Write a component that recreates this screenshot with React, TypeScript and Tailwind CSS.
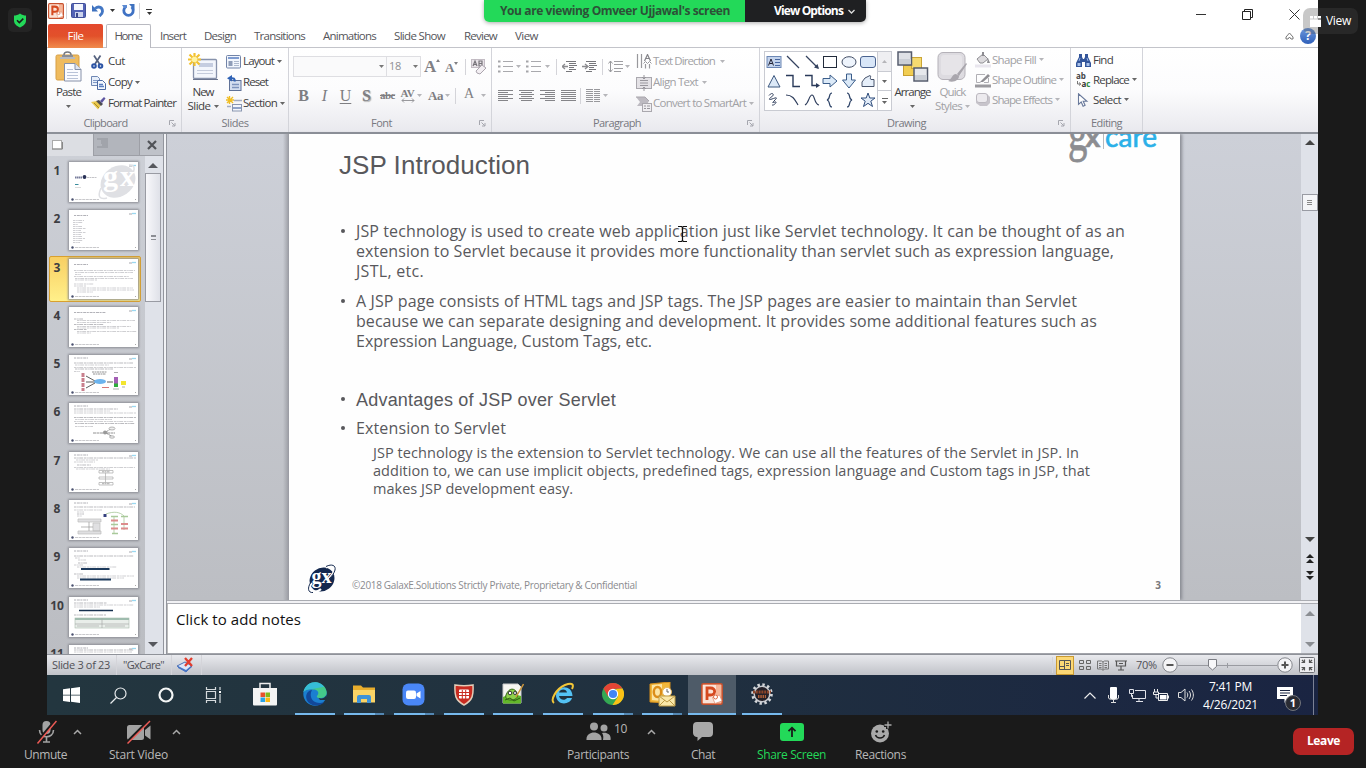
import { useLayoutEffect, useRef, useState } from "react";
import type { ReactNode } from "react";

const UI = "font-['Open_Sans','Noto_Sans',sans-serif]";

/* Single line of text whose letter spacing is tuned so that it fills `w` pixels. */
function T({ w, className = "", children }: { w: number; className?: string; children: string }) {
  const ref = useRef<HTMLSpanElement>(null);
  const [ls, setLs] = useState(0);
  useLayoutEffect(() => {
    if (ref.current) {
      const natural = ref.current.getBoundingClientRect().width;
      setLs((w - natural) / children.length);
    }
  }, []);
  return (
    <span className={`inline-block shrink-0 whitespace-nowrap ${className}`} style={{ width: w }}>
      <span ref={ref} style={{ letterSpacing: ls }}>{children}</span>
    </span>
  );
}

function Svg({ w, h, className = "", vb, children }: { w: number; h: number; className?: string; vb?: string; children: ReactNode }) {
  return (
    <svg width={w} height={h} viewBox={vb ?? `0 0 ${w} ${h}`} fill="none" className={`block shrink-0 ${className}`}>
      {children}
    </svg>
  );
}

function Caret({ className = "text-[#666]" }: { className?: string }) {
  return (
    <Svg w={5} h={3} className={className}><path d="M0 0h5L2.5 3z" fill="currentColor" /></Svg>
  );
}

function Group({ className, label, labelW, launcher = true, children }: { className: string; label: string; labelW: number; launcher?: boolean; children: ReactNode }) {
  return (
    <div className={`flex shrink-0 flex-col border-r border-[#d3d4da] ${className}`}>
      <div className="flex h-[66px] items-start">{children}</div>
      <div className="flex h-[18px] items-center text-[11px] leading-[18px] text-[#77787f]">
        <div className="flex flex-1 justify-center"><T w={labelW}>{label}</T></div>
        {launcher && (
          <Svg w={17} h={8}>
            <path d="M5.5 6V1.500H10M7.500 3.500L11 7M11 4v3H8" stroke="#a5a6ae" />
          </Svg>
        )}
      </div>
    </div>
  );
}

function Item({ icon, text, w, caret, dim, h = "h-[21px]", gap = "gap-[5px]" }: { icon: ReactNode; text: string; w: number; caret?: boolean; dim?: boolean; h?: string; gap?: string }) {
  return (
    <div className={`flex items-center ${h} ${dim ? "text-[#a1a1a5]" : "text-[#3f3f42]"}`}>
      <div className="mr-px flex w-4 shrink-0 items-center">{icon}</div>
      <div className={`-mt-px flex items-center text-[11.500px] leading-[20px] ${gap}`}>
        <T w={w}>{text}</T>
        {caret && <Caret className={dim ? "text-[#b5b5b9]" : "text-[#666]"} />}
      </div>
    </div>
  );
}

const Sep = ({ className = "" }: { className?: string }) => <div className={`h-4 w-px shrink-0 bg-[#d4d4d9] ${className}`} />;

/* ---------- ribbon icons ---------- */
const PasteIcon = () => (
  <Svg w={28} h={32}>
    <rect x="1" y="4" width="23" height="25" rx="1.500" fill="#efbb5e" stroke="#d79f45" />
    <path d="M7 4h11v4H7z" fill="#8b8e96" /><path d="M9 4c0-4 7-4 7 0" stroke="#74777f" strokeWidth="1.500" /><path d="M5 6h15v2H5z" fill="#b6b9c0" />
    <path d="M9.500 12.500H20l6 6V30H9.500z" fill="#fbfcff" stroke="#8590a8" /><path d="M20 12.500v6h6" fill="#dfe5f2" stroke="#8590a8" />
    <path d="M12 18.500h6M12 21.500h11M12 24.500h11M12 27.500h11" stroke="#b9c3d8" />
  </Svg>
);
const CutIcon = () => (
  <Svg w={14} h={14}>
    <path d="M3 0.500L8.500 9M9.500 0.500L4 9" stroke="#54617e" strokeWidth="1.700" />
    <circle cx="3" cy="11" r="1.800" stroke="#2c54a5" strokeWidth="2" /><circle cx="9.500" cy="11" r="1.800" stroke="#2c54a5" strokeWidth="2" />
  </Svg>
);
const CopyIcon = () => (
  <Svg w={15} h={14}>
    <path d="M0.500 0.500h6l2 2v7h-8z" fill="#e8effa" stroke="#6f87b3" /><path d="M2 4.500h4M2 6.500h4" stroke="#7f98c6" />
    <path d="M6.500 4.500h5l3 3v6h-8z" fill="#f4f8ff" stroke="#4c6aa3" /><path d="M8 8.500h4M8 10.500h5" stroke="#5b7fc0" strokeWidth="1.300" />
  </Svg>
);
const PainterIcon = () => (
  <Svg w={15} h={13}>
    <path d="M0 5l6-1 4 4-3 4.500z" fill="#e9c84f" /><path d="M3 6l5 5" stroke="#a88b26" />
    <path d="M5 4l3-1 4 4-2 2z" fill="#4c4c55" /><path d="M9 4l4-4 1.500 1.500L11 6z" fill="#5c54a0" />
  </Svg>
);
const NewSlideIcon = () => (
  <Svg w={30} h={28}>
    <rect x="5.500" y="6.500" width="23" height="19" rx="1" fill="#f3f6fc" stroke="#8792ab" strokeWidth="1.300" />
    <path d="M5 26.500h25" stroke="#6a748e" /><path d="M11 12h14" stroke="#c5cde0" strokeWidth="4" /><path d="M9 17.500h16M9 20.500h16" stroke="#c4cbdb" />
    <path d="M6.500 0v13M0 6.500h13M1.500 1.500l10 10M11.500 1.500l-10 10" stroke="#f3c230" strokeWidth="2.200" /><circle cx="6.500" cy="6.500" r="2.800" fill="#fff3a0" />
  </Svg>
);
const LayoutIcon = () => (
  <Svg w={15} h={14}>
    <rect x="0.500" y="0.500" width="14" height="12.500" rx="1" fill="#f2f6fd" stroke="#7284a8" /><path d="M2 3h11" stroke="#7f9cd0" strokeWidth="2" />
    <path d="M2.500 6h4v5h-4z" fill="#8f9db8" /><path d="M8 6.500h5M8 8.500h5M8 10.500h5" stroke="#aeb9cd" />
  </Svg>
);
const ResetIcon = () => (
  <Svg w={16} h={16}>
    <rect x="3.500" y="5.500" width="11.500" height="10" fill="#d4def0" stroke="#5f7197" /><path d="M6 9.500h7M6 12.500h7" stroke="#7d93bd" strokeWidth="1.600" />
    <path d="M8.500 6.500c.5-3-1-3.500-3.500-3.200" stroke="#2f62b5" strokeWidth="2.200" /><path d="M6 0v6.500L1 3.300z" fill="#2f62b5" />
  </Svg>
);
const SectionIcon = () => (
  <Svg w={16} h={16}>
    <path d="M3.500 0v8M0 4h8M1 1l6 6M7 1L1 7" stroke="#f0bd22" strokeWidth="1.400" />
    <path d="M8 4.500h8M1 10.500h4" stroke="#a4adc0" strokeWidth="1.500" /><rect x="6.500" y="8.500" width="9" height="6.500" fill="#f3f6fc" stroke="#8996b0" /><path d="M7 12h8" stroke="#8fa3c9" strokeWidth="2" />
  </Svg>
);
const Lines = ({ align }: { align: "l" | "c" | "r" | "j" }) => {
  const d = { l: "M0 1h15M0 5h15M0 9h15M0 3h10M0 7h10M0 11h10", c: "M0 1h15M0 5h15M0 9h15M2 3h11M2 7h11M2 11h11", r: "M0 1h15M0 5h15M0 9h15M5 3h10M5 7h10M5 11h10", j: "M0 1h15M0 3h15M0 5h15M0 7h15M0 9h15M0 11h15" }[align];
  return <Svg w={15} h={12}><path d={d} transform="translate(0 -.5)" stroke="#858589" /></Svg>;
};
const BulletsIcon = () => (
  <Svg w={15} h={14}><path d="M0 1.500h2.500M0 6.500h2.500M0 11.500h2.500" stroke="#a4a4a8" strokeWidth="2" /><path d="M5 1.500h10M5 6.500h10M5 11.500h10" stroke="#a9a9ad" /></Svg>
);
const IndentIcon = ({ flip }: { flip?: boolean }) => (
  <Svg w={15} h={12}>
    <path d="M4 .5h10M7 2.500h7M7 4.500h8M7 6.500h5M7 8.500h7M4 10.500h6" stroke="#77777b" />
    <path d={flip ? "M0 5.500h5M3 3l3 2.500-3 2.500" : "M1 5.500h5M3 3L0 5.500 3 8"} stroke="#8b8b8f" strokeWidth="1.300" />
  </Svg>
);
const SpacingIcon = () => (
  <Svg w={15} h={13}><path d="M2.500 1v11M.5 3.500l2-2.500 2 2.500M.5 9.500l2 2.500 2-2.500" stroke="#99999d" /><path d="M6 1.500h9M6 4.500h9M6 8.500h9M6 11.500h7" stroke="#9e9ea2" /></Svg>
);
const ColumnsIcon = () => (
  <Svg w={15} h={13}><path d="M0 .5h7M0 2.500h7M0 4.500h7M0 6.500h7M0 8.500h7M0 10.500h7M0 12.500h7M8 .5h6M8 2.500h6M8 4.500h6M8 6.500h6M8 8.500h6M8 10.500h6M8 12.500h6" stroke="#98989c" /></Svg>
);
const TextDirIcon = () => (
  <Svg w={16} h={15}><path d="M1.500 0v14M5.500 0v14M9.500 14.500V10M13.500 14.500V10" stroke="#98989c" strokeWidth="1.200" /><path d="M7.500 9.500l2-2 2 2M11.500 9.500l2-2 2 2" stroke="#98989c" /><path d="M8.500 7l3-6.500 3 6.500M9.500 4.500h4" stroke="#85858a" strokeWidth="1.200" /></Svg>
);
const AlignTextIcon = () => (
  <Svg w={16} h={16}><rect x=".5" y="2.500" width="15" height="11" fill="#e4e2e6" stroke="#aaa8ae" /><path d="M4 5.500h8M4 8h8M4 10.500h8" stroke="#99979d" strokeWidth="1.200" /><path d="M8 0v4M6 2l2 2 2-2M8 16v-4M6 14l2-2 2 2" stroke="#98969c" /></Svg>
);
const SmartArtIcon = () => (
  <Svg w={16} h={16}><path d="M0 1h9l4 4-3 5H1l3-4z" fill="#bdbac1" /><path d="M0 1h9l4 4" stroke="#a9a6ad" /><rect x="6.500" y="7.500" width="9" height="8" fill="#efedf0" stroke="#aaa8ae" /><path d="M8 10h2M11 10h3M8 12.500h2M11 12.500h3" stroke="#99979d" /></Svg>
);
const ArrangeIcon = () => (
  <Svg w={32} h={32}>
    <rect x="6.500" y="14.500" width="11" height="10" fill="#f1cd52" stroke="#c89f2e" /><rect x="14.500" y="6.500" width="10" height="11" fill="#f6db70" stroke="#cba536" />
    <rect x="1" y="1" width="13.500" height="13" fill="#dfe1e6" stroke="#555c6d" strokeWidth="1.500" /><rect x="17" y="17" width="13.500" height="13" fill="#e6e8ec" stroke="#555c6d" strokeWidth="1.500" />
    <path d="M2 8h12v5H2zM18 24h12v5H18z" fill="#cbcfd6" />
  </Svg>
);
const QuickIcon = () => (
  <Svg w={31} h={32}>
    <rect x="1" y="1.500" width="27" height="27" rx="5" fill="#dddbe0" stroke="#b4b1b8" /><rect x="4" y="4" width="21" height="20" rx="3" fill="#e6e4e8" />
    <path d="M29 12l-9 11 2 2 8-12zM19 23c-4 0-4 5-8 7 6 2 11-1 11-5z" fill="#a9a6ad" />
  </Svg>
);
const FillIcon = () => (
  <Svg w={16} h={16}><path d="M2 7l6-5 5 5-5 4H5z" fill="#dcdadd" stroke="#908f94" /><path d="M7 4V0h2v4M13 6l2 5h-3z" fill="#8e8d92" /><path d="M0 12.500h16v3H0z" fill="#e9e6ee" /></Svg>
);
const OutlineIcon = () => (
  <Svg w={16} h={15}><path d="M10 1.500H1.500v8h4M13.500 5v4.500H9" stroke="#b0afb4" /><path d="M5 9l8-8 2 2-7 6z" fill="#8f8e93" /><path d="M0 13h16" stroke="#9b9a9f" strokeWidth="3" /></Svg>
);
const EffectsIcon = () => (
  <Svg w={16} h={14}><path d="M3 1h9l3 3v6l-3 3H5l-4-3V4z" fill="#c7c4cb" /><rect x="1.500" y=".5" width="11" height="9" rx="2.500" fill="#eceaee" stroke="#bbb8bf" /></Svg>
);
const FindIcon = () => (
  <Svg w={15} h={13}><path d="M3 0h3v3l1 2h1l1-2V0h3v3l3 6v4H9V8H6v5H0V9l3-6z" fill="#33559a" /><path d="M1.500 9h3v3h-3zM10.500 9h3v3h-3z" fill="#a9c2ec" /><path d="M4 4L3 7M11 4l1 3" stroke="#93b1e5" /></Svg>
);
const ReplaceIcon = () => (
  <svg width="16" height="15" viewBox="0 0 16 15" className="block shrink-0 overflow-visible">
    <text x="0" y="6" className="fill-[#444] font-['Open_Sans'] text-[8px] font-bold">ab</text>
    <path d="M1.500 8v3h3M3 9.500L4.800 11 3 12.500" fill="none" stroke="#555" strokeWidth=".8" />
    <text x="5.500" y="14" className="fill-[#333] font-['Open_Sans'] text-[8px] font-bold">a<tspan fill="#2f8a3a">c</tspan></text>
  </svg>
);
const SelectIcon = () => (
  <Svg w={14} h={14}><path d="M2.500.8v10.500l2.700-2.300 1.900 4.300 2-1-1.900-4h3.700z" fill="#fff" stroke="#69799b" strokeWidth="1.100" /></Svg>
);

/* ---------- shapes gallery ---------- */
const shapes: ReactNode[] = [
  <g key="0"><rect x="1" y="2.500" width="14" height="11" fill="#c3d3ec" stroke="#6d88b5" /><path d="M2.500 11.500L5 5l2.500 6.500M3.500 9.500h3" stroke="#223" /><path d="M9 5.500h5M9 8.500h5M9 11.500h5" stroke="#4867a0" /></g>,
  <path key="1" d="M2 2l12 12" stroke="#34425f" strokeWidth="1.200" />,
  <g key="2"><path d="M2 2l12 12" stroke="#34425f" strokeWidth="1.200" /><path d="M15 15l-5-1.500 3.500-3.500z" fill="#34425f" /></g>,
  <rect key="3" x="1.500" y="2.500" width="13" height="11" fill="#fff" stroke="#222b3b" />,
  <ellipse key="4" cx="8" cy="8" rx="7" ry="5.300" fill="#eef4fc" stroke="#444f66" />,
  <rect key="5" x=".5" y="2.500" width="15" height="11" rx="2.500" fill="#d8e6f8" stroke="#49628f" />,
  <path key="6" d="M8 2.500l6 11.500H2z" fill="#dce9f7" stroke="#3d587f" />,
  <path key="7" d="M1 2.500h7v11h7" stroke="#2a3a5a" strokeWidth="1.400" />,
  <g key="8"><path d="M1 2.500h7v10h5" stroke="#2a3a5a" strokeWidth="1.400" /><path d="M16 12.500l-4-2.500v5z" fill="#2a3a5a" /></g>,
  <path key="9" d="M1 5.500h7V2l7 6-7 6v-3.500H1z" fill="#dceaf8" stroke="#3b5d8a" />,
  <path key="10" d="M5.500 1v6H1.500L8 15l6.500-8h-4V1z" fill="#dceaf8" stroke="#3b5d8a" />,
  <path key="11" d="M2 13.500V9l3-4 5-2.500c2 0-1 4 1 4h3v7z" fill="#e6effa" stroke="#48546c" />,
  <path key="12" d="M3 3.500c3-4 6-1 3 1s-4 4 0 2.500 6-2 3 1-3 3 0 2-1 4-3 3" stroke="#34425f" />,
  <path key="13" d="M1 3c7 0 9 5 12 10" stroke="#2e3d5c" strokeWidth="1.200" />,
  <path key="14" d="M1 13C5 11 5 3 8 3s2 9 7 10" stroke="#2e3d5c" strokeWidth="1.200" />,
  <path key="15" d="M10 1C6 1 9 7 5 8c4 1 1 7 5 7" stroke="#2e4468" strokeWidth="1.200" />,
  <path key="16" d="M6 1c4 0 1 6 5 7-4 1-1 7-5 7" stroke="#2e4468" strokeWidth="1.200" />,
  <path key="17" d="M8 1l1.800 5H15l-4.200 3.200L12.500 14.500 8 11.300l-4.500 3.200 1.700-5.300L1 6h5.200z" fill="#e3edf9" stroke="#2f4d7c" />,
];

/* ---------- thumbnails ---------- */
type L = [number, number, number];
const thumbLines: L[][] = [
  [],
  [[4, 10.5, 11], [4, 12.5, 10], [4, 14.5, 5], [4, 16.5, 9], [4, 18.5, 13], [4, 20.5, 8], [4, 22.5, 13], [4, 24.5, 8], [4, 26.5, 9], [4, 28.5, 12], [4, 30.5, 10], [4, 32.5, 7]],
  [[5, 11.5, 61], [6, 13.5, 58], [6, 15.5, 6], [5, 17.5, 55], [6, 19.5, 58], [6, 21, 22], [5, 25, 20], [5, 27, 12], [8, 29, 56], [8, 31, 57], [8, 33, 16]],
  [[5, 12, 9], [8, 13.5, 58], [8, 15.5, 34], [5, 17.5, 30], [8, 19.5, 54], [8, 21, 42], [5, 22.5, 13], [8, 24.5, 60], [8, 26, 14]],
  [[5, 8, 59], [6, 10, 34], [5, 12.5, 62], [6, 14, 38], [5, 16.5, 6]],
  [[5, 6, 44], [5, 8, 36], [5, 10, 62], [5, 14.5, 62], [6, 16.5, 37], [5, 18.5, 60], [6, 20.5, 60], [6, 23.5, 18]],
  [[5, 6, 62], [7, 8, 22], [5, 10, 21], [8, 13, 14], [5, 15.5, 61], [7, 17, 34]],
  [[5, 7, 61], [5, 10, 28], [8, 12, 7], [8, 14, 7], [8, 16, 5]],
  [[5, 8, 60], [6, 10, 5], [9, 12, 8], [9, 15, 9], [5, 17, 9], [8, 19, 40], [5, 26, 9], [8, 28, 57], [8, 30, 47]],
  [[5, 6, 33], [5, 8, 60], [5, 10, 26], [5, 18, 32]],
  [[5, 5, 60], [5, 7, 58]],
];

function thumbExtra(i: number): ReactNode {
  if (i === 0)
    return (
      <g>
        <ellipse cx="49" cy="19.500" rx="18.500" ry="15" fill="#dfe0e4" transform="rotate(-35 49 19.500)" />
        <path d="M60 3c8-1 5 8 2 12M32 26c-4 9-1 12 6 10" stroke="#dfe0e4" strokeWidth="1.500" />
        <text x="34" y="24" className="fill-white font-['Liberation_Serif'] text-[30px] font-bold" textLength="32">gx</text>
        <path d="M6 15.500h7" stroke="#777c9b" strokeWidth="2" strokeDasharray="1.500 .4" /><circle cx="15.500" cy="15" r="1.900" fill="#283056" /><path d="M18 15.500h10" stroke="#c4c4c8" strokeDasharray="2 .5" />
        <path d="M6 22.500h3.500" stroke="#3a8c9c" /><path d="M6 25.500h6" stroke="#ccc" strokeWidth=".7" />
      </g>
    );
  if (i === 4)
    return (
      <g>
        <path d="M14 18v18" stroke="#c9808d" strokeWidth="3" strokeDasharray="4 1" /><path d="M17 21l9 5M17 27h9M17 33l9-5M38 27h6" stroke="#333" strokeWidth=".8" />
        <ellipse cx="31" cy="26.500" rx="6" ry="2.500" fill="#6cb4ee" /><path d="M23 17h15M24 19h13" stroke="#777" strokeWidth=".8" strokeDasharray="2 .5" />
        <rect x="45" y="22" width="4" height="7" fill="#a45fb5" /><rect x="45" y="28.500" width="4" height="3.500" fill="#2fae3d" /><rect x="52" y="26" width="5" height="4" fill="#f3e52e" /><path d="M33 32.500h7" stroke="#c55" strokeWidth=".8" /><path d="M45 17.500h4M44 34h6M53 32h3" stroke="#999" strokeWidth=".8" />
      </g>
    );
  if (i === 5) return <g><path d="M24 30h14M37 29l6-4M37 30l7 4M38 30h8" stroke="#777" strokeWidth=".8" strokeDasharray="3 .5" /><ellipse cx="43" cy="25.500" rx="3" ry="1.500" stroke="#999" fill="#eee" strokeWidth=".7" /><ellipse cx="43" cy="34" rx="2.500" ry="1.200" stroke="#999" fill="#eee" strokeWidth=".7" /><circle cx="36" cy="29.500" r="2" fill="#999" /></g>;
  if (i === 6) return <g stroke="#aaa" strokeWidth=".7"><path d="M30 18.500h14v2.500H30zM30 25h14v2H30zM30 30.500h14v2.500H30zM36.500 21v9.500" /><path d="M33 19.800h8M33 31.700h8" stroke="#888" strokeDasharray="2 .5" /></g>;
  if (i === 7)
    return (
      <g strokeWidth=".7">
        <path d="M9 19h23v3H9zM9 31h23v3H9zM24 23h7v8h-7z" fill="#e0e0e2" stroke="#bbb" /><path d="M20 22v9M12 27h12" stroke="#999" /><rect x="34.500" y="14" width="3" height="3" fill="#35417e" />
        <path d="M37 14c8-3 14-2 18 2v14M45 16v17" stroke="#9bbf8a" /><path d="M42 20.500h7M42 28.500h7M52 24h7M52 28.500h7" stroke="#dc8c8c" strokeWidth="1.800" /><path d="M42 16.500h7M42 24.500h7M43 33.500h6M52 16.500h7" stroke="#a9c99a" strokeWidth="1.500" />
      </g>
    );
  if (i === 8) return <path d="M12 21h28.500M11 31.500h31" stroke="#1d3a5c" strokeWidth="1.800" />;
  if (i === 9) return <g><path d="M10 13.500h34" stroke="#16304f" strokeWidth="1.600" /><rect x="6" y="21" width="54" height="10" fill="#e9eeea" stroke="#a9b8ab" strokeWidth=".6" /><path d="M6 22h54" stroke="#9fbcae" strokeWidth="2" /><path d="M33 21v10M6 27h54M8 29h22M36 29h20" stroke="#aaa" strokeWidth=".7" /></g>;
  return null;
}

function Thumb({ i }: { i: number }) {
  const sel = i === 2;
  return (
    <div className="flex h-[48.300px] w-[93px] shrink-0">
      <div className={`-mt-[3px] flex h-[46px] w-[92px] rounded-[2px] border pt-[2px] ${sel ? "border-[#d8a02f] bg-linear-to-b from-[#f8cf63] to-[#fff08a]" : "border-transparent"}`}>
        <div className="flex w-[19px] shrink-0 justify-center pt-[1px] pr-[5px] text-[12px] font-bold leading-[16px] text-[#3d3d42]">{i + 1}</div>
        <svg width="69" height="40" viewBox="0 0 69 40" fill="none" className="block shrink-0 bg-white shadow-[0_0_2px_1px_#8b8d94]">
          {i > 0 && <path d={`M4 3h${i === 3 ? 32 : 14}`} stroke="#b2b2b8" strokeDasharray="2 .8 3 .6" transform={i === 1 || i === 2 || i === 3 ? "translate(1 2.500)" : "translate(1 0)"} />}
          <path d="M60 4h3" stroke="#c4c4c8" strokeWidth="1.500" /><path d="M63 3.500h4" stroke="#9bd8f0" strokeWidth="1.300" />
          {thumbLines[i].map(([x, y, w], k) => <path key={k} d={`M${x} ${y}h${w}`} stroke={i === 1 || i === 2 ? "#c3c3c8" : k % 3 === 0 ? "#a9a9ae" : "#c3c3c7"} strokeWidth=".8" strokeDasharray="2.500 .7 1.500 .5 4 .8" />)}
          {thumbExtra(i)}
          <circle cx="3.500" cy="37.500" r="1.200" fill="#4a5170" /><path d="M6 37.500h24" stroke="#bbbbbf" strokeWidth=".8" strokeDasharray="3 .6" /><path d="M66 37.500h1" stroke="#aaa" />
        </svg>
      </div>
    </div>
  );
}

/* ---------- taskbar ---------- */
function Task({ children, on, active, split }: { children: ReactNode; on?: boolean; active?: boolean; split?: boolean }) {
  return (
    <div className={`flex h-10 w-[49.700px] shrink-0 flex-col items-center ${active ? "bg-[#4e5b68] bg-clip-content px-[1px]" : ""}`}>
      <div className="flex h-[38px] items-center justify-center">{children}</div>
      {on && (
        <div className={`flex h-[2px] ${active ? "w-full" : "w-10"} bg-[#76b9ed]`}>
          {split && <div className="ml-auto w-[9px] bg-[#5387b3]" />}
        </div>
      )}
    </div>
  );
}

function ZoomBtn({ icon, label, w, color = "text-[#b8b8b8]" }: { icon: ReactNode; label: string; w: number; color?: string }) {
  return (
    <div className={`flex shrink-0 flex-col items-center ${color}`}>
      <div className="flex h-[31px] items-center pt-[2px]">{icon}</div>
      <T w={w} className="text-[12px] leading-[18px]">{label}</T>
    </div>
  );
}
const Up = ({ className = "" }: { className?: string }) => <Svg w={9} h={6} className={className}><path d="M1 5l3.500-3.500L8 5" stroke="#a9a9a9" strokeWidth="1.500" /></Svg>;

const body = "text-[16px] leading-[20px]";

function Bullet({ children, className = "" }: { children: ReactNode; className?: string }) {
  return (
    <div className={`flex ${className}`}>
      <div className="mt-[8px] mr-[11px] ml-[1px] size-[4px] shrink-0 rounded-full bg-[#58585c]" />
      <div className="flex flex-col">{children}</div>
    </div>
  );
}

function Ribbon() {
  return (
    <div className="flex h-[84px] shrink-0 bg-linear-to-b from-white via-[#fcfcfd] via-50% to-[#e9e9ee]">
      <Group className="w-[135px]" label="Clipboard" labelW={44}>
        <div className="flex w-[44px] flex-col items-center pt-[3px] pr-px text-[11.500px] text-[#3f3f42]">
          <PasteIcon />
          <T w={25} className="mt-[1px] leading-[16px]">Paste</T>
          <Caret className="mt-[5px] text-[#666]" />
        </div>
        <div className="pt-[3px]">
          <Item icon={<CutIcon />} text="Cut" w={17} />
          <Item icon={<CopyIcon />} text="Copy" w={24} caret gap="gap-[3px]" />
          <Item icon={<PainterIcon />} text="Format Painter" w={68} />
        </div>
      </Group>
      <Group className="w-[107px]" label="Slides" labelW={27} launcher={false}>
        <div className="flex w-[44px] flex-col items-center pt-[5px] pr-[2px] text-[11.500px] text-[#3f3f42]">
          <NewSlideIcon />
          <T w={21} className="mt-[3px] leading-[16px]">New</T>
          <div className="-mt-[2px] flex items-center gap-[3px]"><T w={23} className="leading-[16px]">Slide</T><Caret /></div>
        </div>
        <div className="pt-[3px]">
          <Item icon={<LayoutIcon />} text="Layout" w={31} caret gap="gap-[3px]" />
          <Item icon={<ResetIcon />} text="Reset" w={25} />
          <Item icon={<SectionIcon />} text="Section" w={34} caret gap="gap-[3px]" />
        </div>
      </Group>
      <Group className="w-[203px]" label="Font" labelW={21}>
        <div className="flex flex-col pt-2 pl-1">
          <div className="flex h-[21px] items-center">
            <div className="flex h-[21px] w-[94px] items-center justify-end border border-[#dedee2] bg-[#fafafb] pr-[2px]"><Caret className="text-[#777]" /></div>
            <div className="flex h-[21px] w-[34px] items-center justify-between border border-l-0 border-[#dedee2] bg-[#fafafb] pr-[2px] pl-[2px] text-[11px] text-[#8f8f93]"><T w={12}>18</T><Caret className="text-[#777]" /></div>
            <div className="ml-[3px] flex w-[20px] font-['Liberation_Serif',serif] text-[17px] font-bold text-[#808084]">A<Svg w={4} h={3} className="mt-[5px]"><path d="M0 3L2 0l2 3z" fill="#808084" /></Svg></div>
            <div className="ml-[1px] flex w-[18px] items-center pt-[2px] font-['Liberation_Serif',serif] text-[13px] font-bold text-[#808084]">A<Svg w={4} h={3} className="-mt-2"><path d="M0 0l2 3 2-3z" fill="#808084" /></Svg></div>
            <Sep className="mr-[5px] ml-[2px]" />
            <Svg w={16} h={17}>
              <rect x=".5" y="1.500" width="13" height="8" fill="#e8e3e8" stroke="#c3bcc4" /><path d="M2 8l2-5 2 5M2.500 6.500h3M8 3v5h3V3zM8 5.500h3" stroke="#77747a" strokeWidth="1.200" />
              <path d="M5 13l6-6 4 3-6 6-3-1z" fill="#f3eff3" stroke="#aba5ae" />
            </Svg>
          </div>
          <div className="mt-2 flex h-[21px] items-center font-['Liberation_Serif',serif] text-[16px] text-[#7e7e82]">
            <div className="w-[21px] text-center font-bold">B</div>
            <div className="w-[21px] text-center italic">I</div>
            <div className="w-[21px] text-center underline underline-offset-2">U</div>
            <div className="w-[21px] text-center font-bold [text-shadow:1px_1px_1px_#aaa]">S</div>
            <div className="flex w-[21px] justify-center"><T w={15} className="text-[11px] font-bold line-through">abc</T></div>
            <div className="flex w-[17px] flex-col items-center justify-center pl-[2px]"><T w={14} className="text-[11px] font-bold leading-[10px]">AV</T><Svg w={14} h={5}><path d="M1 2.500h12M3 .5l-2 2 2 2M11 .5l2 2-2 2" stroke="#99999d" /></Svg></div>
            <Caret className="ml-[2px] text-[#b5b5b9]" />
            <T w={15} className="ml-[6px] text-[13px] font-bold">Aa</T>
            <Caret className="ml-[2px] text-[#b5b5b9]" />
            <Sep className="mr-[8px] ml-[5px]" />
            <div className="w-3 pb-1 text-[14px]">A</div>
            <Caret className="ml-[5px] text-[#b5b5b9]" />
          </div>
        </div>
      </Group>
      <Group className="w-[268px]" label="Paragraph" labelW={48}>
        <div className="flex w-[144px] shrink-0 flex-col pt-2 pl-[6px]">
          <div className="flex h-[21px] items-center">
            <BulletsIcon /><Caret className="mr-[5px] ml-[3px] text-[#b5b5b9]" />
            <BulletsIcon /><Caret className="ml-[4px] text-[#b5b5b9]" />
            <Sep className="mr-[5px] ml-[6px]" /><IndentIcon /><div className="w-[5px]" /><IndentIcon flip />
            <Sep className="mr-[5px] ml-[5px]" /><SpacingIcon /><Caret className="ml-[2px] text-[#b5b5b9]" />
          </div>
          <div className="mt-2 flex h-[21px] items-center">
            <div className="flex gap-[6px]"><Lines align="l" /><Lines align="c" /><Lines align="r" /><Lines align="j" /></div>
            <Sep className="mr-[5px] ml-[4px]" /><ColumnsIcon /><Caret className="ml-[2px] text-[#b5b5b9]" />
          </div>
        </div>
        <div className="pt-[3px]">
          <Item dim icon={<TextDirIcon />} text="Text Direction" w={62} caret />
          <Item dim icon={<AlignTextIcon />} text="Align Text" w={45} caret gap="gap-[4px]" />
          <Item dim icon={<SmartArtIcon />} text="Convert to SmartArt" w={93} caret gap="gap-[3px]" />
        </div>
      </Group>
      <Group className="w-[311px]" label="Drawing" labelW={39}>
        <div className="mt-[3px] ml-1 flex h-[60px] shrink-0 border border-[#c9cbd2] bg-white">
          <div className="grid w-[112px] grid-cols-6 items-center justify-items-center">
            {shapes.map((s, k) => <Svg key={k} w={16} h={16}>{s}</Svg>)}
          </div>
          <div className="flex w-[14px] flex-col border-l border-[#c9cbd2]">
            <div className="flex flex-1 items-center justify-center bg-[#efeff2]"><Caret className="rotate-180 text-[#b5b5b9]" /></div>
            <div className="flex flex-1 items-center justify-center border-y border-[#c9cbd2]"><Caret /></div>
            <div className="flex flex-1 flex-col items-center justify-center gap-[2px]"><div className="h-px w-[6px] bg-[#666]" /><Caret /></div>
          </div>
        </div>
        <div className="flex w-[42px] shrink-0 flex-col items-center pt-[3px] pr-px text-[11.500px] text-[#3f3f42]">
          <ArrangeIcon />
          <T w={36} className="mt-[1px] leading-[16px]">Arrange</T>
          <Caret className="mt-[5px] text-[#666]" />
        </div>
        <div className="flex w-[39px] shrink-0 flex-col items-center pt-[3px] pr-[2px] text-[11.500px] text-[#a1a1a5]">
          <QuickIcon />
          <T w={26} className="mt-[1px] leading-[16px]">Quick</T>
          <div className="-mt-[2px] flex items-center gap-[3px]"><T w={27} className="leading-[16px]">Styles</T><Caret className="text-[#b5b5b9]" /></div>
        </div>
        <div className="pt-[2px] pl-[2px]">
          <Item h="h-5" dim icon={<FillIcon />} text="Shape Fill" w={44} caret gap="gap-[3px]" />
          <Item h="h-5" dim icon={<OutlineIcon />} text="Shape Outline" w={64} caret gap="gap-[3px]" />
          <Item h="h-5" dim icon={<EffectsIcon />} text="Shape Effects" w={60} caret gap="gap-[3px]" />
        </div>
      </Group>
      <Group className="w-[72px]" label="Editing" labelW={31} launcher={false}>
        <div className="pt-[2px] pl-[5px]">
          <Item h="h-5" icon={<FindIcon />} text="Find" w={20} />
          <Item h="h-5" icon={<ReplaceIcon />} text="Replace" w={36} caret gap="gap-[3px]" />
          <Item h="h-5" icon={<SelectIcon />} text="Select" w={28} caret gap="gap-[3px]" />
        </div>
      </Group>
    </div>
  );
}

const PptIcon = ({ s }: { s: number }) => (
  <Svg w={s} h={s} vb="0 0 22 22">
    <rect x=".8" y=".8" width="20.400" height="20.400" rx="1.500" fill="#f6b699" stroke="#c6502e" strokeWidth="1.500" /><rect x="2" y="2" width="13" height="18" fill="#fbe3d8" />
    <path d="M6 17V5h3.500c5.500 0 5.500 7 0 7H7" stroke="#d5491f" strokeWidth="2.800" /><path d="M11.500 14.500l7-2.500 2.500 6-7 2.500z" fill="#fff" stroke="#e08a6b" strokeWidth=".7" /><circle cx="14.500" cy="14" r="2" stroke="#dd6a43" fill="#fff" />
  </Svg>
);

export default function App() {
  return (
    <div className={`relative flex h-[768px] w-[1366px] flex-col overflow-hidden bg-[#1a1a1a] ${UI}`}>
      <div className="flex h-[715px] shrink-0">
        <div className="flex w-[47px] shrink-0 justify-end pt-2 pr-[15px]">
          <div className="flex size-6 items-center justify-center rounded-[5px] bg-[#242424]">
            <Svg w={14} h={15}><path d="M7 .5c2 1.500 4 2 6 2v5c0 3.500-3 5.700-6 7-3-1.300-6-3.500-6-7v-5c2 0 4-.5 6-2z" fill="#23d959" /><path d="M4 7.300l2.300 2.300 4-4" stroke="#1a1a1a" strokeWidth="1.500" /></Svg>
          </div>
        </div>

        <div className="flex w-[1271px] shrink-0 flex-col overflow-hidden bg-white">
          {/* title bar */}
          <div className="flex h-6 shrink-0 items-center">
            <div className="flex items-center pb-[3px] pl-[1px]">
              <PptIcon s={16} />
              <Sep className="mr-1 ml-[2px] bg-[#999]" />
              <Svg w={15} h={15}><rect x=".5" y=".5" width="14" height="14" rx="1" fill="#5363b5" stroke="#414f9a" /><path d="M3 1h9v6H3z" fill="#f3f6fd" /><path d="M4 9h8v5H4z" fill="#ccd3ec" /><path d="M5 10h2v4H5z" fill="#3c488b" /></Svg>
              <Svg w={13} h={13} className="ml-[6px]"><path d="M3 4.500c4-3 7.500-1 7.500 3 0 2-1 3-3 4.500" stroke="#4377c4" strokeWidth="2.800" /><path d="M0 7.500V1l6 6.500z" fill="#3f72bf" /></Svg>
              <Caret className="ml-[5px] text-[#333]" />
              <Svg w={13} h={13} className="ml-[7px]"><path d="M3.500 3a4.700 4.700 0 1 0 6 0" stroke="#3f72c4" strokeWidth="2.800" /><path d="M7 0h5.500v6z" fill="#3f72bf" /><path d="M0 1h5v3H2z" fill="#5c8ad2" /></Svg>
              <Sep className="mr-[6px] ml-[4px] bg-[#aaa]" />
              <div className="flex flex-col items-center gap-[2px] pt-[2px]"><div className="h-px w-[6px] bg-[#333]" /><Caret className="text-[#333]" /></div>
            </div>
            <div className="ml-auto flex items-center gap-9 pt-1 pr-[18px]">
              <Svg w={10} h={10}><path d="M0 5.500h10" stroke="#333" /></Svg>
              <Svg w={11} h={11}><path d="M.5 2.500h8v8h-8zM2.500 2.500v-2h8v8h-2" stroke="#222" /></Svg>
              <Svg w={11} h={11}><path d="M.5.5l10 10M10.500.5l-10 10" stroke="#333" /></Svg>
            </div>
          </div>
          {/* tabs */}
          <div className="flex h-6 shrink-0 items-center border-b border-[#c3c4ca] text-[11.500px] leading-[23px] text-[#55555a]">
            <div className="ml-[1px] flex h-6 w-[55px] justify-center self-start rounded-t-[2px] bg-linear-to-b from-[#e4492e] via-[#e2502a] to-[#f08a4c] text-white"><T w={16}>File</T></div>
            <div className="z-10 ml-[3px] flex h-6 w-[45px] justify-center self-start rounded-t-[2px] border-x border-t border-[#b9bac1] bg-white leading-[22px]"><T w={27} className="-ml-px">Home</T></div>
            <T w={26} className="ml-[9px]">Insert</T>
            <T w={32} className="ml-[18px]">Design</T>
            <T w={51} className="ml-[18px]">Transitions</T>
            <T w={53} className="ml-[18px]">Animations</T>
            <T w={51} className="ml-[18px]">Slide Show</T>
            <T w={33} className="ml-[19px]">Review</T>
            <T w={23} className="ml-[18px]">View</T>
            <Svg w={9} h={8} className="ml-auto"><path d="M1 5l3.500-4L8 5v2H6L4.500 5 3 7H1z" stroke="#777" fill="#fff" /></Svg>
            <div className="mr-[2px] ml-[6px] flex size-4 items-center justify-center rounded-full bg-linear-to-b from-[#6d97dc] to-[#2f5fb9] text-[12px] font-bold leading-none text-white">?</div>
          </div>

          <Ribbon />
          <div className="h-[2px] shrink-0 bg-[#8c9098]" />

          {/* workspace */}
          <div className="flex h-[520px] shrink-0">
            <div className="flex w-[116px] shrink-0 flex-col bg-linear-to-b from-[#cdd0d7] to-[#bbbdc2]">
              <div className="flex h-[22px] shrink-0 text-[#666]">
                <div className="flex w-[46px] items-center bg-[#dcdee3] pl-[5px]"><Svg w={11} h={10}><rect x=".5" y=".5" width="9" height="8.500" fill="#fff" stroke="#aaa" /><path d="M0 9h10.500V2" stroke="#888" /></Svg></div>
                <div className="flex w-[47px] items-center border border-t-0 border-[#9d9fa6] bg-[#b2b5bc] pb-[3px] pl-[3px]"><Svg w={12} h={10}><path d="M0 1h11M4 3h7M4 5h7M5 7h6M0 9h11" stroke="#9c9ea5" strokeWidth="1.300" /></Svg></div>
                <div className="flex flex-1 items-center justify-center border-b border-[#9d9fa6] bg-[#bfc2c9]"><Svg w={10} h={10}><path d="M1 1l8 8M9 1L1 9" stroke="#505257" strokeWidth="2.200" /></Svg></div>
              </div>
              <div className="flex min-h-0 flex-1">
                <div className="flex min-w-0 flex-1 flex-col overflow-hidden pt-[6px] pl-[2px]">
                  {thumbLines.map((_, i) => <Thumb key={i} i={i} />)}
                </div>
                <div className="flex w-[18px] shrink-0 flex-col items-center bg-[#dfe2e9] pr-[2px]">
                  <div className="flex h-[17px] shrink-0 items-center pt-[1px]"><Svg w={10} h={5}><path d="M0 5L5 0l5 5z" fill="#55575c" /></Svg></div>
                  <div className="flex h-[129px] w-4 shrink-0 flex-col items-center justify-center gap-[2px] border border-[#999ba3] bg-linear-to-r from-[#f8f8fb] to-[#dfe1e8]">
                    <div className="h-[2px] w-[5px] bg-[#8c8e94]" /><div className="h-px w-[5px] bg-[#8c8e94]" />
                  </div>
                  <Svg w={10} h={5} className="mt-auto mb-[7px]"><path d="M0 0h10L5 5z" fill="#55575c" /></Svg>
                </div>
              </div>
            </div>
            <div className="w-1 shrink-0 border-r border-l border-[#92959d] bg-[#f1f2f5]" />

            <div className="flex w-[1151px] shrink-0 flex-col">
              <div className="flex h-[466px] shrink-0 bg-linear-to-b from-[#cdd0d8] to-[#bcbec3]">
                <div className="w-[122px] shrink-0 bg-linear-to-r from-transparent from-95% to-[#9a9ca3]" />
                <div className="flex w-[891px] shrink-0 flex-col bg-[#fefefe] text-[#58585c] shadow-[2px_0_3px_#888b93]">
                  <div className="flex h-[85px] justify-between pl-[50px]">
                    <T w={191} className="pt-[14px] font-['Liberation_Sans',sans-serif] text-[26px] leading-[35px]">JSP Introduction</T>
                    <svg width="112" height="30" viewBox="0 0 112 30" className="block shrink-0 overflow-hidden">
                      <text transform="translate(0 15.500) scale(.9 1.320)" className="fill-[#8c8d91] font-['Liberation_Serif',serif] text-[43px]" stroke="#8c8d91" strokeWidth=".6">g</text>
                      <text x="17" y="13" className="fill-[#8c8d91] font-['Liberation_Sans',sans-serif] text-[28px] font-bold" stroke="#8c8d91" strokeWidth=".5">x</text>
                      <path d="M35.500 0v15" stroke="#b9babd" />
                      <text x="37" y="12.500" textLength="52" className="fill-[#2bb0e8] font-['Lato',sans-serif] text-[28px]" stroke="#2bb0e8" strokeWidth=".6">care</text>
                    </svg>
                  </div>
                  <div className="pl-[51px]">
                    <Bullet className="mt-[2px]">
                      <T w={769} className={body}>JSP technology is used to create web application just like Servlet technology. It can be thought of as an</T>
                      <T w={758} className={body}>extension to Servlet because it provides more functionality than servlet such as expression language,</T>
                      <T w={68} className={body}>JSTL, etc.</T>
                    </Bullet>
                    <Bullet className="mt-[10px]">
                      <T w={721} className={body}>A JSP page consists of HTML tags and JSP tags. The JSP pages are easier to maintain than Servlet</T>
                      <T w={741} className={body}>because we can separate designing and development. It provides some additional features such as</T>
                      <T w={296} className={body}>Expression Language, Custom Tags, etc.</T>
                    </Bullet>
                    <Bullet className="mt-[38px]">
                      <T w={260} className="font-['Liberation_Sans',sans-serif] text-[18px] leading-[22px]">Advantages of JSP over Servlet</T>
                    </Bullet>
                    <Bullet className="mt-[7px]">
                      <T w={150} className={body}>Extension to Servlet</T>
                    </Bullet>
                    <div className="mt-[6px] flex flex-col pl-[33px] text-[14.500px] leading-[18px]">
                      <T w={706}>JSP technology is the extension to Servlet technology. We can use all the features of the Servlet in JSP. In</T>
                      <T w={717}>addition to, we can use implicit objects, predefined tags, expression language and Custom tags in JSP, that</T>
                      <T w={200}>makes JSP development easy.</T>
                    </div>
                  </div>
                  <div className="mt-auto flex h-[36px] items-start pl-[18px] text-[10px] text-[#8b8b8f]">
                    <Svg w={30} h={30}>
                      <ellipse cx="15" cy="15.500" rx="13" ry="11.500" fill="#14284e" transform="rotate(-38 15 15.500)" />
                      <path d="M19 3.500c5-2.500 9-2 8.500 2C27 9 24 12 21 15M5 19c-4 5-3 9 1 9 3 0 6-1 8-3" stroke="#fff" strokeWidth="2" />
                      <path d="M19 2.500c6-3 10-1 9 3.500-.7 3-3 6-6 9M4 18c-4 6-3 11 2 10.500" stroke="#14284e" strokeWidth="1" />
                      <text x="4.500" y="19" className="fill-white font-['Liberation_Serif',serif] text-[20px] font-bold" textLength="20">gx</text>
                    </Svg>
                    <T w={285} className="mt-[13px] ml-[15px] leading-[16px]">©2018 GalaxE.Solutions Strictly Private, Proprietary &amp; Confidential</T>
                    <div className="mt-[13px] mr-[19px] ml-auto text-[10px] font-bold leading-[16px] text-[#77777b]">3</div>
                  </div>
                </div>
                <div className="flex-1" />
                <div className="flex w-[17px] shrink-0 flex-col items-center bg-[#dfe2e9]">
                  <Svg w={10} h={5} className="mt-[6px]"><path d="M0 5L5 0l5 5z" fill="#444" /></Svg>
                  <div className="mt-[49px] flex h-[17px] w-4 flex-col items-center justify-center gap-px border border-[#999ba3] bg-[#f4f5f8]"><div className="h-px w-[5px] bg-[#888]" /><div className="h-px w-[5px] bg-[#888]" /><div className="h-px w-[5px] bg-[#888]" /></div>
                  <Svg w={10} h={5} className="mt-auto"><path d="M0 0h10L5 5z" fill="#444" /></Svg>
                  <Svg w={8} h={9} className="mt-[12px]"><path d="M0 4l4-4 4 4zM0 9l4-4 4 4z" fill="#222" /></Svg>
                  <Svg w={8} h={9} className="mt-[8px] mb-[20px]"><path d="M0 0l4 4 4-4zM0 5l4 4 4-4z" fill="#222" /></Svg>
                </div>
              </div>
              <div className="h-1 shrink-0 border-y border-[#aaacb2] bg-[#f1f1f4]" />
              <div className="flex h-[49px] shrink-0 bg-white">
                <div className="flex-1 border-l border-[#bbb] pt-1 pl-[8px] text-[15px] leading-[22px] text-[#111]"><T w={125}>Click to add notes</T></div>
                <div className="flex w-[17px] flex-col items-center justify-between bg-[#dfe2e9] pt-[7px] pb-[6px]">
                  <Svg w={10} h={5}><path d="M0 5L5 0l5 5z" fill="#8b8e93" /></Svg>
                  <Svg w={10} h={5}><path d="M0 0h10L5 5z" fill="#8b8e93" /></Svg>
                </div>
              </div>
              <div className="h-px bg-[#a2a4aa]" />
            </div>
          </div>

          {/* status bar */}
          <div className="flex h-[21px] shrink-0 items-center border-t border-[#8f9299] bg-linear-to-b from-[#e9eaee] to-[#c0c2c8] text-[11px] leading-[20px] text-[#505056]">
            <T w={58} className="ml-[5px]">Slide 3 of 23</T>
            <Sep className="ml-[6px] h-5 bg-[#b2b4ba]" />
            <T w={41} className="ml-[6px]">"GxCare"</T>
            <Sep className="ml-[7px] h-5 bg-[#b2b4ba]" />
            <Svg w={17} h={16} className="ml-[5px]"><path d="M0 9l8-4 7 4-6 6z" fill="#dce7f8" stroke="#4c70b5" /><path d="M1 11l8 4 6-5v-2l-6 5-8-4z" fill="#4775c5" /><path d="M8 1l7 8M15 1L8 9" stroke="#e23d2d" strokeWidth="2.300" /></Svg>
            <Sep className="ml-[7px] h-5 bg-[#b2b4ba]" />
            <Sep className="ml-auto h-4 bg-[#b2b4ba]" />
            <div className="ml-[3px] flex h-[19px] w-[18px] items-center justify-center border border-[#c99a32] bg-[#fcd875]"><Svg w={12} h={11}><path d="M.5.500h11v9H.5zM5.500.500v9M7 3.500h3M7 5.500h3M.5 6.500h5" stroke="#555" /></Svg></div>
            <Svg w={12} h={11} className="ml-[5px]"><path d="M.5.500h4v3h-4zM7.500.500h4v3h-4zM.5 6.500h4v3h-4zM7.500 6.500h4v3h-4z" stroke="#666" /></Svg>
            <Svg w={12} h={11} className="ml-[6px]"><path d="M.5 1h4L6 2l1.500-1h4v8h-4L6 10.500 4.500 9h-4zM6 2v8M2 3.500h2.500M2 5.500h2.500M2 7.500h2.500M7.500 3.500H10M7.500 5.500H10M7.500 7.500H10" stroke="#777" /></Svg>
            <Svg w={12} h={11} className="ml-[6px]"><path d="M0 1h12M1.500 1v5h9V1M6 6v4M3 10h6M4 3.500h4" stroke="#555" strokeWidth="1.200" /></Svg>
            <T w={21} className="ml-[9px]">70%</T>
            <Svg w={16} h={16} className="ml-[5px]"><circle cx="8" cy="8" r="7.200" fill="#f4f4f6" stroke="#85878d" /><path d="M4.500 8h7" stroke="#555" strokeWidth="2" /></Svg>
            <Svg w={99} h={16}><path d="M0 8.500h99M49.500 6v5" stroke="#999ba1" /><path d="M30.500 2.500h8v7l-4 3.500-4-3.500z" fill="#f7f7f9" stroke="#7c7e84" /></Svg>
            <Svg w={16} h={16}><circle cx="8" cy="8" r="7.200" fill="#f4f4f6" stroke="#85878d" /><path d="M4.500 8h7M8 4.500v7" stroke="#555" strokeWidth="2" /></Svg>
            <Svg w={16} h={16} className="mr-[3px] ml-[6px]"><rect x=".5" y=".5" width="15" height="15" rx="1" fill="#eeeef1" stroke="#6e7076" /><path d="M5.500 2.500v3h-3M10.500 2.500v3h3M5.500 13.500v-3h-3M10.500 13.500v-3h3M3 3l2.500 2.500M13 3l-2.500 2.500M3 13l2.500-2.500M13 13l-2.500-2.500" stroke="#555" strokeWidth="1.200" /></Svg>
          </div>

          {/* taskbar */}
          <div className="flex h-10 shrink-0 items-center bg-linear-to-r from-[#23363f] via-[#20303f] to-[#1a2442] text-white">
            <div className="flex w-[190px] shrink-0">
              <div className="flex w-[47.500px] justify-center pl-px"><Svg w={17} h={16}><path d="M0 2.300l7-1v6.400H0zM8 1.200L17 0v7.700H8zM0 8.600h7V15l-7-1zM8 8.600h9V16l-9-1.200z" fill="#fff" /></Svg></div>
              <div className="flex w-[47.500px] justify-center"><Svg w={17} h={17}><circle cx="10.500" cy="6.500" r="5.500" stroke="#e8ebed" strokeWidth="1.200" /><path d="M6.500 10.500L.5 16.500" stroke="#e8ebed" strokeWidth="1.200" /></Svg></div>
              <div className="flex w-[47.500px] justify-center"><Svg w={16} h={16}><circle cx="8" cy="8" r="6.500" stroke="#f3f5f5" strokeWidth="2.200" /></Svg></div>
              <div className="flex w-[47.500px] justify-center"><Svg w={17} h={16}><path d="M1.500 4.500h9v7h-9zM1.500 0v2.500h9V0M1.500 16v-2.500h9V16M15 0v3M15 7v9" stroke="#d5dadd" strokeWidth="1.200" /><path d="M14 4h2v2h-2z" fill="#fff" /></Svg></div>
            </div>
            <div className="ml-[3px] flex">
              <Task><Svg w={24} h={24}><path d="M7 7V1.500h10V7" stroke="#eee" strokeWidth="1.500" /><path d="M0 6h24v16.500a1 1 0 0 1-1 1H1a1 1 0 0 1-1-1z" fill="#f4f4f4" /><path d="M7.500 10.500H12V15H7.500z" fill="#e8502c" /><path d="M12.500 10.500H17V15h-4.500z" fill="#83b81a" /><path d="M7.500 15.500H12V20H7.500z" fill="#2aa3e6" /><path d="M12.500 15.500H17V20h-4.500z" fill="#fcb812" /></Svg></Task>
              <Task on>
                <Svg w={24} h={24}><circle cx="12" cy="12" r="11.700" fill="#1b7fd0" /><path d="M.5 10C2 3 8 0 13 .3 20 1 24 7 23.700 11c-.5 4-4 5.500-8 5-2-.5-2.500-1.500-1-3 2-3-1-6-5-5.500C5 7 2 8 .5 10z" fill="#44c98a" /><path d="M.5 10C2 3 8 0 13 .3c3 .3 6 2 8 4.500L9 7C5 7 2 8 .5 10z" fill="#36bdd8" /><path d="M9 8c-3 5-1 13 8 13 2 0 4-.8 5-1.700C19 24 11 25 6 21 1 16 3 9 9 8z" fill="#12489a" /><path d="M15.500 16c3 1 6 .5 8-3l.5 5h-7z" fill="#21333f" /></Svg>
              </Task>
              <Task on split><Svg w={22} h={20}><path d="M0 1.500h8l2 2h12V18H0z" fill="#e9ae2d" /><path d="M0 6h22v12.500H0z" fill="#fbd466" /><path d="M4 19v-6a2 2 0 0 1 2-2h10a2 2 0 0 1 2 2v6h-4v-4H8v4z" fill="#3f93d8" /></Svg></Task>
              <Task on split><Svg w={23} h={23}><rect x=".5" y=".5" width="22" height="22" rx="6" fill="#4a87f7" /><rect x="4" y="7.500" width="10" height="8.500" rx="2" fill="#fff" /><path d="M14.500 10.500l4-2.500v7.500l-4-2.500z" fill="#fff" /></Svg></Task>
              <Task on><Svg w={20} h={23}><path d="M1 2c6 1 12 1 18 0 .5 10 0 15-9 20C1 17 .5 12 1 2z" fill="#c82b20" stroke="#e3cdb8" strokeWidth="1.500" /><rect x="5" y="6.500" width="10" height="9" rx="1" fill="#fff" /><path d="M5 9.500h10M5 12.500h10M8.300 7v9M11.700 7v9" stroke="#c82b20" /></Svg></Task>
              <Task on><Svg w={22} h={22}><path d="M1 1h15l3 3v16H1z" fill="#f7f7f2" stroke="#ccc" /><path d="M1 14c6-3 12-3 18-1v7.500H1z" fill="#63b72a" /><path d="M4 12c3-8 9-7 11-2s-2 7-6 7-6-2-5-5z" fill="#8ed14a" stroke="#36691a" /><circle cx="8" cy="10" r="1.800" fill="#fff" stroke="#333" /><circle cx="13" cy="10" r="1.500" fill="#fff" stroke="#333" /><path d="M3 17l5-2 4 3 6-3" stroke="#2f5d14" /><path d="M14 14L21.500 1" stroke="#cc963d" strokeWidth="1.500" /></Svg></Task>
              <Task on><Svg w={24} h={24}><path d="M21.500 14H8c.5 4 6 5 8 2h5c-2 7-15 8-16-2C5 3 21 2 21.500 14zM8 10.500h8c-.5-4-7-4-8 0z" fill="#53c2f4" /><path d="M3 21c-4-3 2-14 11-18 8-3 9 0 7 4" stroke="#f3c637" strokeWidth="2" /></Svg></Task>
              <Task on split><Svg w={22} h={22}><circle cx="11" cy="11" r="11" fill="#34a853" /><path d="M1.500 5.500A11 11 0 0 1 20.500 5.500L11 6 6 13.500z" fill="#e54435" /><path d="M20.500 5.500A11 11 0 0 1 10.500 22L16 13.500 14 6z" fill="#fbc116" /><circle cx="11" cy="11" r="5.200" fill="#fff" /><circle cx="11" cy="11" r="4.100" fill="#4285f4" /></Svg></Task>
              <Task on split><Svg w={27} h={25}><path d="M1 2l20-2v21l-20-1z" fill="#f1b73b" stroke="#d68f1c" /><path d="M3 3l10-1v17L3 18z" fill="#fce5a5" /><ellipse cx="8.500" cy="10" rx="3.700" ry="5" stroke="#dc8d19" strokeWidth="2.500" /><circle cx="18" cy="10" r="4.500" fill="#fff" stroke="#e5b65e" /><path d="M18 7v3h2" stroke="#666" /><path d="M10 14h16v10H10z" fill="#fae8a9" stroke="#bd9a45" /><path d="M10 14l8 6 8-6M10 24l6-6M26 24l-6-6" stroke="#bd9a45" /></Svg></Task>
              <Task on active><PptIcon s={22} /></Task>
              <Task on>
                <Svg w={22} h={22}><circle cx="11" cy="11" r="9" stroke="#d5d7da" strokeWidth="3.600" strokeDasharray="2.300 2.420" /><circle cx="11" cy="11" r="7.800" fill="#252129" stroke="#c9cbd0" strokeWidth="1.500" /><path d="M2 9h18" stroke="#8d452a" strokeWidth="3" strokeDasharray="2 .8" /><path d="M7 13.500h8" stroke="#b05f38" strokeWidth="3" strokeDasharray="1.500 .8" /></Svg>
              </Task>
            </div>
            <div className="ml-auto flex items-center">
              <Svg w={12} h={7}><path d="M.5 6.500L6 1l5.500 5.500" stroke="#eee" strokeWidth="1.200" /></Svg>
              <Svg w={11} h={16} className="ml-[12px]"><rect x="2" width="7" height="12" rx="1" fill="#fff" /><path d="M.5 8v3c0 2 10 2 10 0V8M5.500 12v3.500M3 15.500h5" stroke="#ddd" /></Svg>
              <Svg w={17} h={13} className="ml-[10px]"><path d="M6 1.500h10.500v8H3.500V6M10 9.500v3M7 12.500h7M.5.500h4v4h-4zM2.500 4.500v3h1" stroke="#e1e3ea" /></Svg>
              <Svg w={16} h={13} className="ml-[7px]"><path d="M5.500 4.500h9v7h-9z" stroke="#eee" /><path d="M7 6h6.500v4.500H7z" fill="#fff" /><path d="M15.500 6.500v3M1.500 0v3M4.500 0v3M.5 3h5v2.500h-5zM3 5.500V9h2" stroke="#eee" /></Svg>
              <Svg w={16} h={14} className="ml-[9px]"><path d="M.5 4.500H3l4-3.500v12L3 9.500H.5zM9 4.500c1 1.500 1 3.500 0 5M11 3c2 2.500 2 5.500 0 8M13.500 1.500c2.500 3.500 2.500 7.500 0 11" stroke="#ddd" /></Svg>
              <div className="mt-px ml-[8px] flex w-[57px] flex-col items-center text-[12px] leading-[18px]"><T w={43}>7:41 PM</T><T w={55}>4/26/2021</T></div>
              <div className="relative ml-[18px] w-[26px]">
                <Svg w={17} h={17}><path d="M0 0h16v12H10l-2.500 4V12H0z" fill="#fff" /><path d="M3 3.500h10M3 6h10M3 8.500h7" stroke="#1b2643" /></Svg>
                <div className="absolute top-[8px] left-[8px] flex size-[16px] items-center justify-center rounded-full border border-[#72757c] bg-[#292b33] text-[11px] font-bold leading-none">1</div>
              </div>
              <div className="ml-[10px] h-10 w-px bg-[#7b8195]" />
              <div className="w-[4px]" />
            </div>
          </div>
        </div>
        <div className="flex-1" />
      </div>

      {/* meeting controls */}
      <div className="flex h-[53px] shrink-0 items-start">
        <div className="ml-6 flex">
          <ZoomBtn label="Unmute" w={43} icon={<Svg w={22} h={24}><rect x="7.500" y="1" width="8" height="13" rx="4" fill="#a3a3a3" /><path d="M4.500 10c0 9 14 9 14 0M11.500 17v5M8 22h7" stroke="#a3a3a3" strokeWidth="1.600" /><path d="M20.500 0L1.500 22.500" stroke="#1a1a1a" strokeWidth="2.500" /><path d="M21.500 1L2.500 23.500" stroke="#ee5b56" strokeWidth="1.500" /></Svg>} />
          <Up className="mt-[14px] ml-[6px]" />
        </div>
        <div className="ml-[27px] flex">
          <ZoomBtn label="Start Video" w={59} icon={<Svg w={26} h={24}><rect x="1" y="5" width="17" height="15" rx="2.500" fill="#a3a3a3" /><path d="M19 10l5.500-4.500v14L19 15.500z" fill="#a3a3a3" /><path d="M23 0L.5 22.500" stroke="#1a1a1a" strokeWidth="2.500" /><path d="M24 1L1.500 23.500" stroke="#ee5b56" strokeWidth="1.500" /></Svg>} />
          <Up className="mt-[14px] ml-[4px]" />
        </div>
        <div className="ml-[386px] flex">
          <ZoomBtn label="Participants" w={62} icon={<div className="flex pl-[17px]"><Svg w={25} h={19}><circle cx="8" cy="4.500" r="4" fill="#a3a3a3" /><path d="M.5 18c-1-10 16-10 15 0z" fill="#a3a3a3" /><circle cx="18" cy="6" r="3.500" fill="#a3a3a3" /><path d="M17 18h7.500c1-5-3-8-8.500-7 1.500 2 1.500 4 1 7z" fill="#a3a3a3" /></Svg><T w={13} className="-mt-px ml-[3px] text-[12px] leading-[16px]">10</T></div>} />
          <Up className="mt-[14px] ml-[18px]" />
        </div>
        <div className="ml-[35px]"><ZoomBtn label="Chat" w={24} icon={<Svg w={20} h={19}><path d="M4 0h12a4 4 0 0 1 4 4v7a4 4 0 0 1-4 4H9l-4.500 4v-4A4 4 0 0 1 0 11V4a4 4 0 0 1 4-4z" fill="#a9a9a9" /></Svg>} /></div>
        <div className="ml-[42px]"><ZoomBtn label="Share Screen" w={69} color="text-[#23d959]" icon={<Svg w={24} h={18}><rect width="24" height="18" rx="3" fill="#23d959" /><path d="M12 14V5M8.500 8.200L12 4.700l3.500 3.500" stroke="#1a1a1a" strokeWidth="1.800" /></Svg>} /></div>
        <div className="ml-[29px]"><ZoomBtn label="Reactions" w={51} icon={<Svg w={22} h={22}><circle cx="10" cy="12.500" r="9" fill="#a9a9a9" /><path d="M18 0v8M14 4h8" stroke="#1a1a1a" strokeWidth="4" /><path d="M18 .5v7M14.500 4h7" stroke="#a9a9a9" strokeWidth="1.300" /><circle cx="6.800" cy="10.500" r="1.300" fill="#1a1a1a" /><circle cx="13.200" cy="10.500" r="1.300" fill="#1a1a1a" /><path d="M5.500 14c1.500 4 7.500 4 9 0" stroke="#1a1a1a" strokeWidth="1.500" /></Svg>} /></div>
        <div className="mt-[13px] mr-3 ml-auto flex h-[27px] w-[61px] items-center justify-center rounded-[7px] bg-[#b52424] text-[12px] font-bold text-white"><T w={33} className="-mt-px">Leave</T></div>
      </div>

      {/* screen-share banner */}
      <div className="absolute top-0 left-[484px] flex h-[22px] overflow-hidden rounded-b-[5px] text-[12px] font-bold leading-[22px] shadow-[0_1px_4px_#0005]">
        <div className="w-[261px] bg-[#23d959] pl-4 text-[#2c5137]"><T w={230}>You are viewing Omveer Ujjawal's screen</T></div>
        <div className="flex w-[121px] items-center bg-[#1f2022] pl-[29px] text-white"><T w={69}>View Options</T><Svg w={7} h={5} className="ml-[5px]"><path d="M.5 1l3 3 3-3" stroke="#ddd" strokeWidth="1.300" /></Svg></div>
      </div>

      {/* view mode button */}
      <div className="absolute top-2 left-[1303px] flex h-[26px] w-[55px] items-center rounded-[7px] bg-[#4a4a4a]/30 pl-[7px] text-[12px] text-white">
        <Svg w={11} h={11}><path d="M0 0h3v2.500H0zM4 0h3v2.500H4zM8 0h3v2.500H8zM0 3.500h11V11H0z" fill="#fff" /></Svg>
        <T w={25} className="-mt-px ml-[5px]">View</T>
      </div>

      {/* text cursor */}
      <Svg w={9} h={16} className="absolute top-[226px] left-[678px]"><path d="M0 .5h3.500l1 1 1-1H9M4.500 1v14M0 15.500h3.500l1-1 1 1H9" stroke="#111" strokeWidth="1.200" /></Svg>
    </div>
  );
}
